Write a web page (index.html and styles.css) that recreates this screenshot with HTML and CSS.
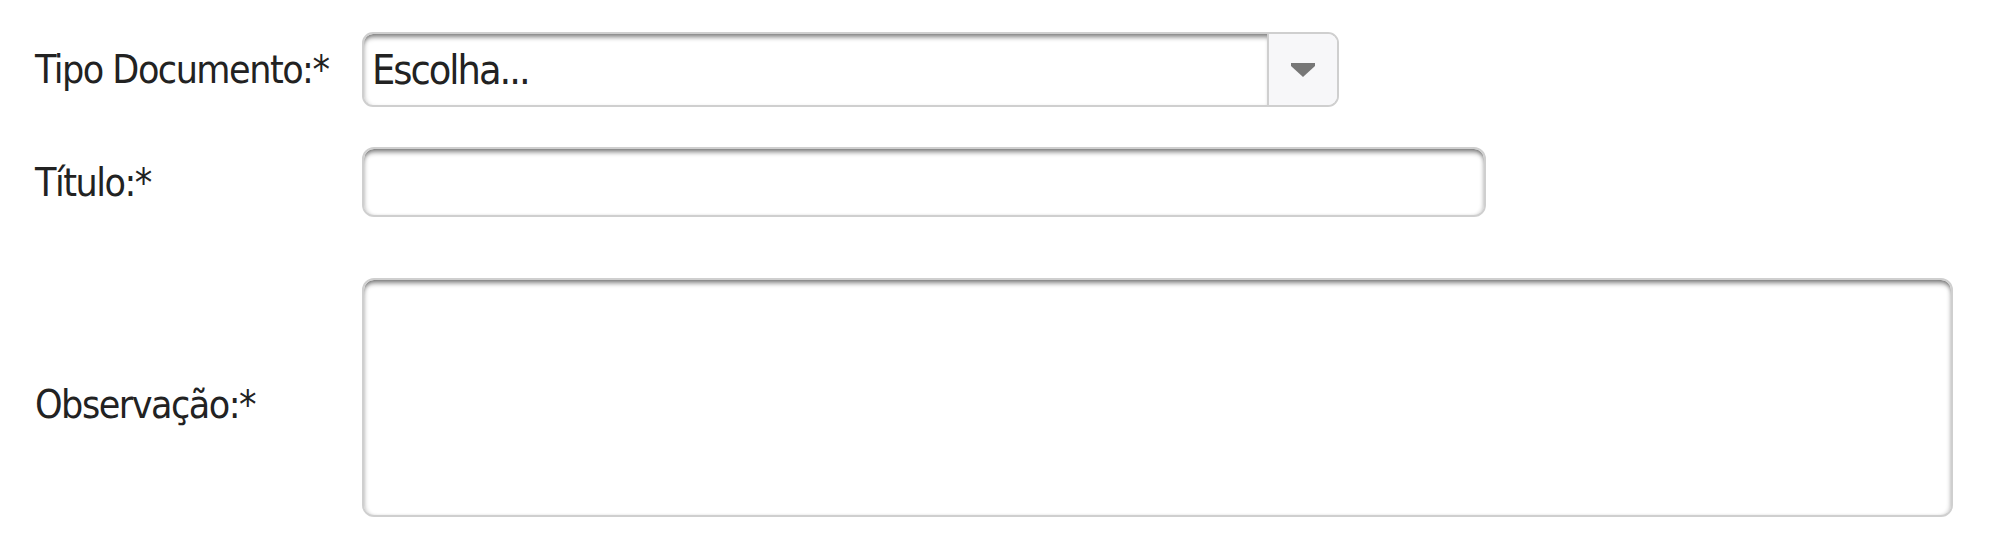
FILE: index.html
```html
<!DOCTYPE html>
<html lang="pt">
<head>
<meta charset="utf-8">
<title>Formulário</title>
<link rel="stylesheet" href="styles.css">
</head>
<body>
<form class="form">
  <div class="row row-select">
    <label class="label">Tipo Documento:*</label>
    <div class="select">
      <span class="select-value">Escolha...</span>
      <span class="select-addon">
        <svg width="24" height="14" viewBox="0 0 24 14"><path d="M0 0H24V3L12 14L0 3Z" fill="#777"/></svg>
      </span>
    </div>
  </div>
  <div class="row row-title">
    <label class="label">Título:*</label>
    <input class="input" type="text">
  </div>
  <div class="row row-obs">
    <label class="label label-obs">Observação:*</label>
    <textarea class="textarea"></textarea>
  </div>
</form>
</body>
</html>
```
FILE: styles.css
```css
html, body {
  margin: 0;
  background: #fff;
}
.form {
  padding: 32px 0 0 35px;
  font-family: "DejaVu Sans Condensed", "DejaVu Sans", sans-serif;
  font-stretch: condensed;
  color: #222;
}
.row {
  display: flex;
  align-items: center;
}
.label {
  width: 327px;
  flex: none;
  font-size: 39px;
  letter-spacing: -1.5px;
  line-height: 1;
}
.row-select { height: 75px; margin-bottom: 40px; }
.row-title { height: 70px; margin-bottom: 61px; }
.row-obs { height: 239px; }
.label-obs { padding-top: 13px; }

.select {
  box-sizing: border-box;
  width: 977px;
  height: 75px;
  display: flex;
  border: 2px solid #cfcfcf;
  border-radius: 11px;
  overflow: hidden;
}
.select-value {
  flex: 1;
  display: flex;
  align-items: center;
  padding-left: 8px;
  font-size: 41px;
  letter-spacing: -2px;
  border-radius: 9px 0 0 9px;
  box-shadow: inset 0 6px 5px -3px rgba(0,0,0,0.5), inset 3px 0 4px -2px rgba(0,0,0,0.18);
}
.select-addon {
  width: 68px;
  flex: none;
  display: flex;
  align-items: center;
  justify-content: center;
  background: #f7f7f9;
  border-left: 2px solid #cfcfcf;
}
.input, .textarea {
  box-sizing: border-box;
  border: 2px solid #cfcfcf;
  border-radius: 12px;
  background: #fff;
  box-shadow: inset 0 6px 5px -3px rgba(0,0,0,0.5), inset 3px 0 4px -2px rgba(0,0,0,0.2), inset -3px 0 4px -2px rgba(0,0,0,0.2);
  outline: none;
  margin: 0;
  padding: 0;
  font: inherit;
}
.input {
  width: 1124px;
  height: 70px;
}
.textarea {
  width: 1591px;
  height: 239px;
  resize: none;
}
```
